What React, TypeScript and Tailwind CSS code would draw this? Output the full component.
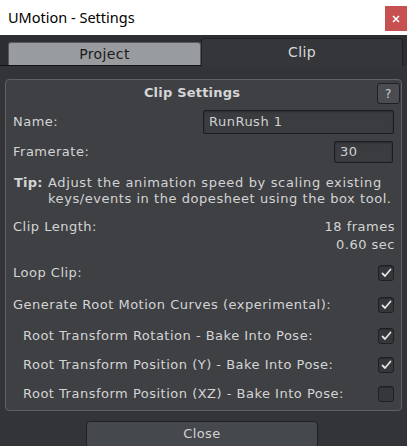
import { useState } from 'react';

const font = { fontFamily: '"DejaVu Sans", Verdana, sans-serif' };

function Check({ on }: { on: boolean }) {
	return (
		<div className="w-[16px] h-[16px] rounded-[3px] bg-[#35373b] border border-[#1f2023] shadow-[inset_0_1px_0_#2a2b2e] flex items-center justify-center">
			{on && (
				<svg width="11" height="10" viewBox="0 0 11 10">
					<path d="M1.5 5.5 L4 8 L9.5 1.5" fill="none" stroke="#e2e2e2" strokeWidth="1.8" strokeLinecap="round" strokeLinejoin="round" />
				</svg>
			)}
		</div>
	);
}

function CheckRow({ label, on, indent, h }: { label: string; on: boolean; indent?: boolean; h: string }) {
	return (
		<div className={`flex items-center justify-between pr-[7px] ${h} ${indent ? 'pl-[16px]' : 'pl-[6px]'}`}>
			<span>{label}</span>
			<Check on={on} />
		</div>
	);
}

export default function App() {
	const [tab] = useState<'project' | 'clip'>('clip');

	return (
		<div className="w-[407px] h-[446px] flex flex-col bg-[#2f3034] overflow-hidden">
			<div className="h-[35px] bg-white flex items-center justify-between shrink-0">
				<span className="pl-[8px] text-[14.5px] text-black" style={{ fontFamily: '"Noto Sans", "Open Sans", sans-serif' }}>UMotion - Settings</span>
				<div className="w-[22px] h-[25px] bg-[#c75050] flex items-center justify-center self-start mt-[6px]">
					<svg width="8" height="8" viewBox="0 0 8 8">
						<path d="M1 1 L7 7 M7 1 L1 7" stroke="#fff" strokeWidth="1.6" />
					</svg>
				</div>
			</div>

			<div className="h-[31px] flex items-end shrink-0 bg-[#2d2e32] tracking-[0.4px]" style={font}>
				<div className="w-[201px] h-[24px] pl-[8px] border-b border-[#111214]">
					<div className="h-[23px] bg-[#999c9f] rounded-t-[3px] border border-b-0 border-[#56585b] flex items-center justify-center text-[14px] text-[#1a1a1a]">
						Project
					</div>
				</div>
				<div className={`w-[202px] h-[28px] rounded-t-[4px] border border-b-0 border-[#1f2023] flex items-center justify-center text-[14px] ${tab === 'clip' ? 'bg-[#35363a] text-[#d8d8d8]' : ''}`}>
					Clip
				</div>
			</div>

			<div className="flex-1 bg-[#333438] flex flex-col" style={font}>
				<div className="mx-[5px] mt-[13px] h-[332px] rounded-[4px] border border-[#5f6165] bg-[#3e4044] text-[13px] tracking-[0.5px] text-[#d4d4d4] flex flex-col pl-[1px]">
					<div className="h-[26px] flex items-center shrink-0">
						<div className="flex-1 text-center font-bold tracking-[0.2px] text-[#d6d6d6]">Clip Settings</div>
						<div className="w-[23px] h-[21px] mr-[1px] mt-[1px] rounded-[3px] bg-[#4a4c50] border border-[#1f2023] flex items-center justify-center text-[12px] text-[#d0d0d0]">?</div>
					</div>

					<div className="h-[30px] mt-[1px] flex items-center justify-between pl-[6px] pr-[7px]">
						<span>Name:</span>
						<div className="w-[191px] h-[24px] rounded-[2px] bg-[#3a3c40] border border-[#1c1d20] shadow-[inset_0_1px_2px_#2a2b2e] flex items-center px-[5px] text-[#d0d0d0]">RunRush 1</div>
					</div>

					<div className="h-[30px] flex items-center justify-between pl-[6px] pr-[8px]">
						<span>Framerate:</span>
						<div className="w-[59px] h-[22px] rounded-[2px] bg-[#3a3c40] border border-[#1c1d20] shadow-[inset_0_1px_2px_#2a2b2e] flex items-center px-[5px] text-[#d0d0d0]">30</div>
					</div>

					<div className="mt-[8px] flex pl-[7px] leading-[16px]">
						<span className="font-bold w-[34px] shrink-0 tracking-[0.2px]">Tip:</span>
						<span className="whitespace-nowrap tracking-[0.65px]">
							Adjust the animation speed by scaling existing
							<br />
							<span className="tracking-[0.55px]">keys/events in the dopesheet using the box tool.</span>
						</span>
					</div>

					<div className="mt-[11px] flex justify-between pl-[6px] pr-[6px] leading-[18px]">
						<span>Clip Length:</span>
						<div className="flex flex-col items-end">
							<span>18 frames</span>
							<span>0.60 sec</span>
						</div>
					</div>

					<div className="mt-[3px]">
						<CheckRow label="Loop Clip:" on h="h-[32px]" />
						<CheckRow label="Generate Root Motion Curves (experimental):" on h="h-[32px]" />
						<CheckRow label="Root Transform Rotation - Bake Into Pose:" on indent h="h-[29px]" />
						<CheckRow label="Root Transform Position (Y) - Bake Into Pose:" on indent h="h-[29px]" />
						<CheckRow label="Root Transform Position (XZ) - Bake Into Pose:" on={false} indent h="h-[30px]" />
					</div>
				</div>

				<div className="ml-[86px] mt-[10px] w-[232px] h-[30px] rounded-t-[4px] bg-[#45484c] border border-[#1f2023] flex items-center justify-center text-[13px] tracking-[0.4px] text-[#d2d2d2] pb-[4px]">
					Close
				</div>
			</div>
		</div>
	);
}
